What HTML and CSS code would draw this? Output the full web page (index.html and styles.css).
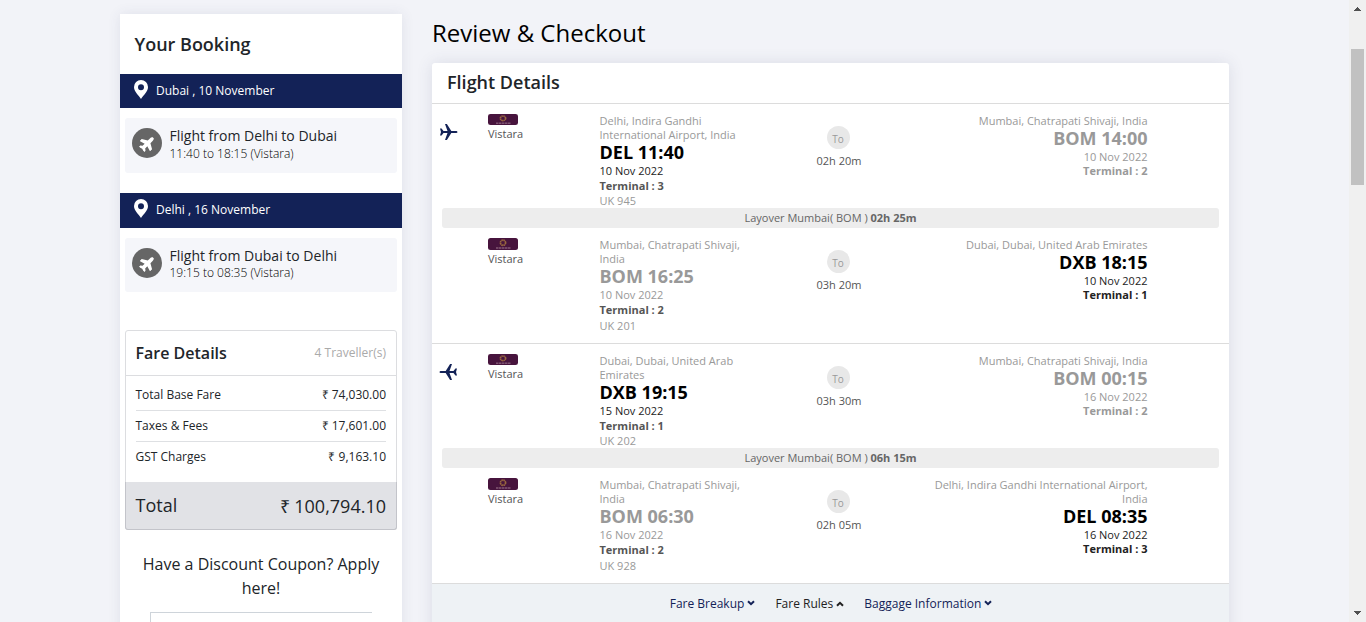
FILE: index.html
```html
<!DOCTYPE html>
<html lang="en">
<head>
<meta charset="utf-8">
<title>Review &amp; Checkout</title>
<link rel="stylesheet" href="styles.css">
</head>
<body>
<svg class="defs" width="0" height="0">
  <symbol id="plane" viewBox="0 0 576 512"><path d="M480 192H365.710L260.610 8.060A16.014 16.014 0 0 0 246.710 0h-65.500c-10.630 0-18.300 10.170-15.380 20.390L214.860 192H112l-43.200-57.600c-3.020-4.030-7.770-6.400-12.800-6.400H16.010C5.600 128-2.040 137.780.49 147.880L32 256 .49 364.120C-2.040 374.220 5.600 384 16.010 384H56c5.040 0 9.780-2.370 12.800-6.400L112 320h102.860l-49.030 171.600c-2.920 10.220 4.750 20.400 15.380 20.400h65.500c5.740 0 11.040-3.080 13.890-8.060L365.710 320H480c35.350 0 96-28.650 96-64s-60.650-64-96-64z"/></symbol>
  <symbol id="jet" viewBox="0 0 18 16"><path d="M0 4.400h1.600L3.500 6.900h4L5 .1h1.900L11.300 6.900h4.400c1.100 0 1.800.5 1.800 1.100s-.7 1.100-1.800 1.100h-4.400L6.900 15.900H5L7.500 9.100h-4L1.600 11.600H0L1 8z"/></symbol>
  <symbol id="pin" viewBox="0 0 14 19"><path fill-rule="evenodd" d="M7 0a7 7 0 0 1 7 7c0 4.600-4.500 8-7 12C4.500 15 0 11.600 0 7a7 7 0 0 1 7-7zm0 4.200a3 3 0 1 0 0 6 3 3 0 0 0 0-6z"/></symbol>
  <symbol id="chev" viewBox="0 0 8 6"><path d="M1 1.200 4 4.200 7 1.200" fill="none" stroke="currentColor" stroke-width="2"/></symbol>
  <symbol id="vistara" viewBox="0 0 30 12" preserveAspectRatio="none"><rect width="30" height="12" rx="2.500" fill="#47143d"/><circle cx="15" cy="4.700" r="2.600" fill="none" stroke="#99683f" stroke-width="1.700" stroke-dasharray="1.600 .44"/><path d="M8 10h15" stroke="#a98598" stroke-width=".9" stroke-dasharray="2.500 .5"/></symbol>
</svg>
<div class="viewport">
  <div class="page">
    <aside class="booking">
      <h2 class="booking-title">Your Booking</h2>
      <div class="stop"><svg class="pin"><use href="#pin"/></svg><span>Dubai , 10 November</span></div>
      <div class="trip trip-out"><span class="badge"><svg><use href="#plane"/></svg></span><div><div class="trip-name">Flight from Delhi to Dubai</div><div class="trip-time">11:40 to 18:15 (Vistara)</div></div></div>
      <div class="stop stop-back"><svg class="pin"><use href="#pin"/></svg><span>Delhi , 16 November</span></div>
      <div class="trip trip-back"><span class="badge"><svg><use href="#plane"/></svg></span><div><div class="trip-name">Flight from Dubai to Delhi</div><div class="trip-time">19:15 to 08:35 (Vistara)</div></div></div>
      <section class="fare">
        <header class="fare-head"><h3>Fare Details</h3><span>4 Traveller(s)</span></header>
        <div class="fare-list">
          <div class="fare-row"><span>Total Base Fare</span><span>₹ 74,030.00</span></div>
          <div class="fare-row"><span>Taxes &amp; Fees</span><span>₹ 17,601.00</span></div>
          <div class="fare-row"><span>GST Charges</span><span>₹ 9,163.10</span></div>
        </div>
        <div class="fare-total"><span>Total</span><span class="sum">₹ 100,794.10</span></div>
      </section>
      <p class="coupon">Have a Discount Coupon? Apply here!</p>
      <div class="coupon-input"></div>
    </aside>
    <main class="checkout">
      <h1>Review &amp; Checkout</h1>
      <section class="card">
        <h2 class="card-title">Flight Details</h2>
        <div class="journey">
          <div class="segment">
            <svg class="jet"><use href="#jet"/></svg>
            <div class="airline"><svg><use href="#vistara"/></svg><span>Vistara</span></div>
            <div class="from"><div class="place">Delhi, Indira Gandhi International Airport, India</div><div class="code strong">DEL 11:40</div><div class="date dark">10 Nov 2022</div><div class="terminal">Terminal : 3</div><div class="flight">UK 945</div></div>
            <div class="duration"><span class="to">To</span><span>02h 20m</span></div>
            <div class="arrive"><div class="place">Mumbai, Chatrapati Shivaji, India</div><div class="code">BOM 14:00</div><div class="date">10 Nov 2022</div><div class="terminal muted">Terminal : 2</div></div>
          </div>
          <div class="layover">Layover Mumbai( BOM ) <b>02h 25m</b></div>
          <div class="segment last">
            <span></span>
            <div class="airline"><svg><use href="#vistara"/></svg><span>Vistara</span></div>
            <div class="from"><div class="place">Mumbai, Chatrapati Shivaji, India</div><div class="code">BOM 16:25</div><div class="date">10 Nov 2022</div><div class="terminal">Terminal : 2</div><div class="flight">UK 201</div></div>
            <div class="duration"><span class="to">To</span><span>03h 20m</span></div>
            <div class="arrive"><div class="place">Dubai, Dubai, United Arab Emirates</div><div class="code strong">DXB 18:15</div><div class="date dark">10 Nov 2022</div><div class="terminal dark">Terminal : 1</div></div>
          </div>
        </div>
        <div class="journey">
          <div class="segment">
            <svg class="jet back"><use href="#jet"/></svg>
            <div class="airline"><svg><use href="#vistara"/></svg><span>Vistara</span></div>
            <div class="from"><div class="place">Dubai, Dubai, United Arab Emirates</div><div class="code strong">DXB 19:15</div><div class="date dark">15 Nov 2022</div><div class="terminal">Terminal : 1</div><div class="flight">UK 202</div></div>
            <div class="duration"><span class="to">To</span><span>03h 30m</span></div>
            <div class="arrive"><div class="place">Mumbai, Chatrapati Shivaji, India</div><div class="code">BOM 00:15</div><div class="date">16 Nov 2022</div><div class="terminal muted">Terminal : 2</div></div>
          </div>
          <div class="layover">Layover Mumbai( BOM ) <b>06h 15m</b></div>
          <div class="segment last">
            <span></span>
            <div class="airline"><svg><use href="#vistara"/></svg><span>Vistara</span></div>
            <div class="from"><div class="place">Mumbai, Chatrapati Shivaji, India</div><div class="code">BOM 06:30</div><div class="date">16 Nov 2022</div><div class="terminal">Terminal : 2</div><div class="flight">UK 928</div></div>
            <div class="duration"><span class="to">To</span><span>02h 05m</span></div>
            <div class="arrive"><div class="place">Delhi, Indira Gandhi International Airport, India</div><div class="code strong">DEL 08:35</div><div class="date dark">16 Nov 2022</div><div class="terminal dark">Terminal : 3</div></div>
          </div>
        </div>
        <footer class="links">
          <a>Fare Breakup<svg><use href="#chev"/></svg></a>
          <a class="open">Fare Rules<svg><use href="#chev"/></svg></a>
          <a>Baggage Information<svg><use href="#chev"/></svg></a>
        </footer>
      </section>
    </main>
  </div>
  <div class="scrollbar">
    <svg class="arrow" viewBox="0 0 7 4"><path d="M0 4V3h1V2h1V1h1V0h1v1h1v1h1v1h1v1z"/></svg>
    <div class="thumb"></div>
    <svg class="arrow down" viewBox="0 0 7 4"><path d="M0 4V3h1V2h1V1h1V0h1v1h1v1h1v1h1v1z"/></svg>
  </div>
</div>
</body>
</html>
```
FILE: styles.css
```css
* { box-sizing: border-box; }
body { margin: 0; font-family: "Open Sans", sans-serif; color: #212529; background: #f2f3f8; }
h1, h2, h3, p { margin: 0; font-weight: 600; }
.defs { display: none; }
.viewport { display: flex; height: 622px; overflow: hidden; }
.page { flex: 1; display: grid; grid-template-columns: 282px 797px; column-gap: 30px; padding-left: 120px; height: 622px; overflow: hidden; }

.booking { margin-top: 14px; height: 640px; background: #fff; box-shadow: 0 0 12px rgba(60, 70, 110, .1); }
.booking-title { height: 60px; padding-left: 14.500px; font-size: 18px; line-height: 61px; }
.stop { display: flex; align-items: center; height: 34px; padding: 0 0 2px 14px; gap: 8px; background: #132257; color: #fff; font-size: 12px; }
.stop-back { height: 35px; }
.pin { width: 14px; height: 19px; margin-bottom: 2px; fill: #fff; }
.trip { display: flex; gap: 7.500px; height: 54px; margin: 10px 5px 0; padding: 10px 7px; background: #f5f6fa; border-radius: 3px; }
.trip-out { height: 55px; margin-bottom: 20px; }
.badge { display: grid; place-items: center; width: 30px; height: 30px; border-radius: 50%; background: #666; }
.badge svg { width: 17px; height: 15px; fill: #fff; transform: rotate(-45deg); }
.trip-name { font-size: 14px; line-height: 15px; }
.trip-time { font-size: 12px; line-height: 22px; font-weight: 300; color: #000; }
.trip-back .trip-time { line-height: 20px; }
.fare { margin: 38px 5px 0; border: 1px solid #dcdde0; border-radius: 3px; height: 200px; }
.fare-head { display: flex; align-items: center; justify-content: space-between; height: 45px; padding: 0 10px 0 9.500px; border-bottom: 1px solid #dcdde0; }
.fare-head h3 { font-size: 16px; }
.fare-head span { margin-top: -2px; font-size: 12px; color: #aaa; }
.fare-list { padding: 4px 10px 0 9.500px; height: 107px; font-size: 12px; }
.fare-row { display: flex; align-items: center; justify-content: space-between; height: 31px; padding-bottom: 2px; border-bottom: 1px solid #dee0e3; }
.fare-row:last-child { border: 0; padding-bottom: 3px; }
.fare-total { display: flex; align-items: center; justify-content: space-between; height: 48px; margin: -1px -1px 0; padding: 0 10px 0 9.500px; border: solid #c3c4ca; border-width: 0 1px 1px; border-radius: 0 0 3px 3px; background: #e1e2e6; font-size: 18px; }
.fare-total span { margin-top: -1px; }
.fare-total .sum { margin-top: 1px; }
.coupon { margin-top: 22px; padding: 0 15px; text-align: center; font-size: 16px; font-weight: 400; line-height: 24px; }
.coupon-input { margin: 12px 30px 0; height: 38px; border: 1px solid #ced4da; border-right: 0; }

.checkout h1 { margin-top: 15px; height: 48px; font-size: 24px; line-height: 36px; font-weight: 400; color: #000; }
.card { height: 600px; background: #fff; border-radius: 3px 3px 0 0; box-shadow: 0 0 16px rgba(60, 70, 110, .13); }
.card-title { height: 41px; padding-left: 15px; border-bottom: 1px solid #dcdcdc; font-size: 18px; line-height: 39px; }
.journey { height: 240px; border-bottom: 1px solid #dcdcdc; }
.segment { display: grid; grid-template-columns: 48px 111.500px 154px 171px 223px; padding: 10px 0 0 8px; height: 104px; font-size: 11px; line-height: 14px; color: #999; }
.segment.last { height: 115px; }
.jet { width: 18px; height: 16px; margin-top: 10px; fill: #132257; }
.jet.back { margin-left: -1px; transform: scaleX(-1); }
.airline { display: flex; flex-direction: column; gap: 2px; color: #555; }
.airline svg { width: 30px; height: 11px; }
.last .airline svg { height: 12px; }
.code { height: 22px; font-size: 18px; line-height: 20px; font-weight: 700; }
.strong { color: #000; }
.terminal { font-weight: 700; color: #555; }
.place { padding-right: 1px; }
.arrive .place { padding: 0; }
.from .terminal, .flight { margin-top: 1px; }
.last .flight { margin-top: 2px; }
.date.dark, .terminal.dark { color: #222; }
.terminal.muted { color: #999; }
.duration { display: flex; flex-direction: column; align-items: center; padding: 12px 0 0; color: #555; }
.to { width: 23px; height: 23px; margin: 0 2px 5px 0; border-radius: 50%; background: #e8e8e8; color: #999; text-align: center; font-size: 10px; line-height: 26px; }
.arrive { text-align: right; }
.layover { height: 20px; margin: 0 10px; border-radius: 3px; background: #ededed; text-align: center; font-size: 11px; line-height: 20px; color: #666; }
.links { display: flex; justify-content: center; gap: 20px; height: 60px; padding-left: 1px; background: #eef2f5; font-size: 12px; line-height: 39px; color: #132257; }
.links svg { width: 8px; height: 6px; margin: 0 0 2px 3px; }
.open { color: #222; }
.open svg { margin-bottom: 1px; transform: rotate(180deg); }

.scrollbar { display: flex; flex-direction: column; align-items: center; width: 17px; height: 622px; background: #f0f0f0; }
.arrow { width: 7px; height: 4px; margin-top: 7px; fill: #505050; shape-rendering: crispEdges; }
.thumb { width: 13px; height: 136px; margin-top: 38px; background: #c1c1c1; }
.down { margin: auto 0 7px; transform: rotate(180deg); }
```
